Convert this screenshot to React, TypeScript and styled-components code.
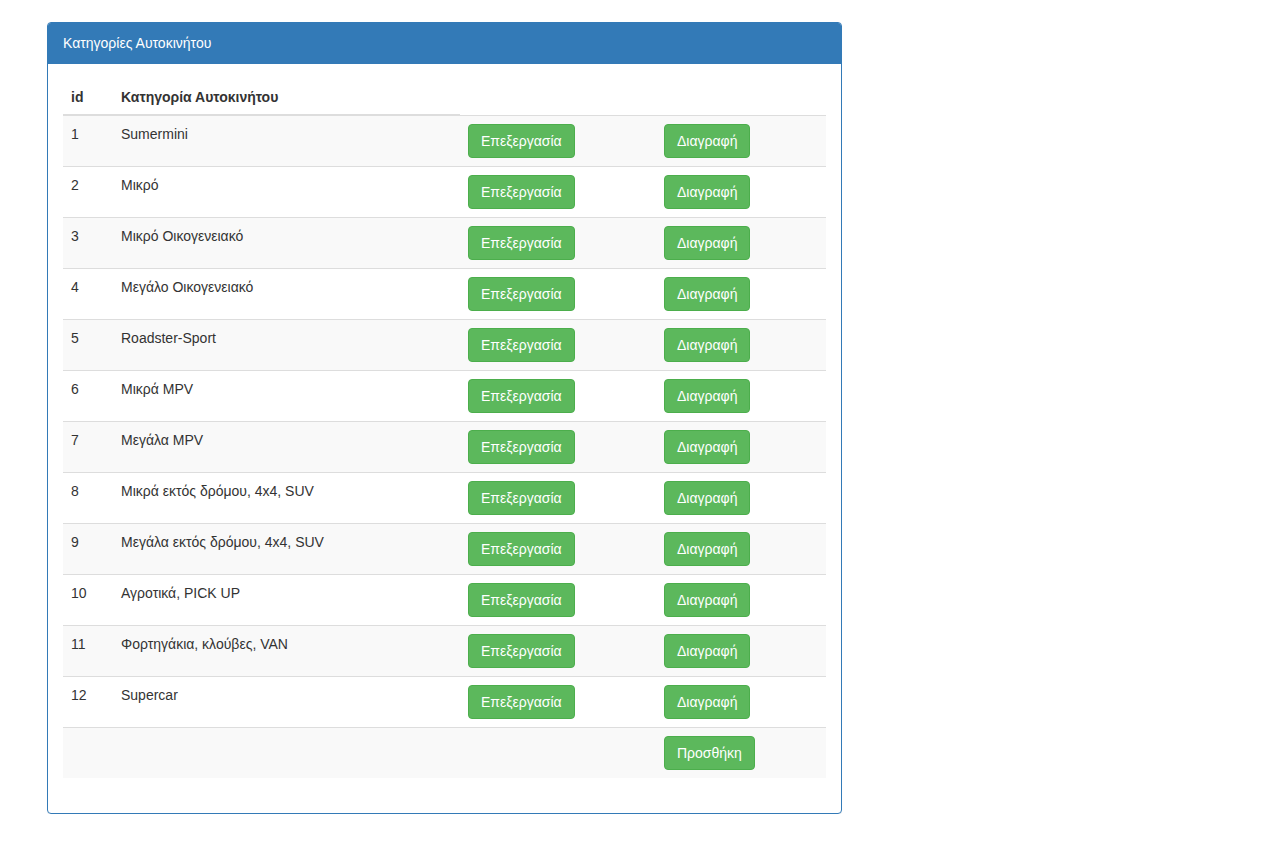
import React from "react";
import styled, { createGlobalStyle } from "styled-components";

const GlobalStyle = createGlobalStyle`
  html, body {
    margin: 0;
    padding: 0;
    background: #fff;
  }
  body {
    font-family: "Liberation Sans", Arial, Helvetica, sans-serif;
    font-size: 14px;
    line-height: 1.42857143;
    color: #333;
  }
  * {
    box-sizing: border-box;
  }
`;

const Page = styled.div`
  padding: 22px 0 0 47px;
`;

const Panel = styled.div`
  width: 795px;
  background-color: #fff;
  border: 1px solid #337ab7;
  border-radius: 4px;
  box-shadow: 0 1px 1px rgba(0, 0, 0, 0.05);
`;

const PanelHeading = styled.div`
  padding: 10px 15px;
  color: #fff;
  background-color: #337ab7;
  border-bottom: 1px solid #337ab7;
  border-top-left-radius: 3px;
  border-top-right-radius: 3px;
`;

const PanelBody = styled.div`
  padding: 15px;
`;

const Table = styled.table`
  width: 100%;
  max-width: 100%;
  margin-bottom: 20px;
  border-collapse: collapse;
  border-spacing: 0;
`;

const Th = styled.th`
  padding: 8px 8px 7px;
  text-align: left;
  vertical-align: bottom;
  font-weight: bold;
  line-height: 1.42857143;
  border-bottom: 2px solid #ddd;
`;

const Row = styled.tr<{ $striped: boolean }>`
  background-color: ${(p) => (p.$striped ? "#f9f9f9" : "transparent")};
`;

const Td = styled.td`
  padding: 8px;
  line-height: 1.42857143;
  vertical-align: top;
  border-top: 1px solid #ddd;
`;

const Button = styled.button`
  display: inline-block;
  margin: 0;
  padding: 6px 12px;
  font-family: inherit;
  font-size: 14px;
  font-weight: normal;
  line-height: 1.42857143;
  text-align: center;
  white-space: nowrap;
  color: #fff;
  background-color: #5cb85c;
  border: 1px solid #4cae4c;
  border-radius: 4px;
  cursor: pointer;
`;

const categories = [
  "Sumermini",
  "Μικρό",
  "Μικρό Οικογενειακό",
  "Μεγάλο Οικογενειακό",
  "Roadster-Sport",
  "Μικρά MPV",
  "Μεγάλα MPV",
  "Μικρά εκτός δρόμου, 4x4, SUV",
  "Μεγάλα εκτός δρόμου, 4x4, SUV",
  "Αγροτικά, PICK UP",
  "Φορτηγάκια, κλούβες, VAN",
  "Supercar",
];

export default function App() {
  return (
    <>
      <GlobalStyle />
      <Page>
        <Panel>
          <PanelHeading>Κατηγορίες Αυτοκινήτου</PanelHeading>
          <PanelBody>
            <Table>
              <colgroup>
                <col style={{ width: 50 }} />
                <col style={{ width: 347 }} />
                <col style={{ width: 196 }} />
                <col style={{ width: 170 }} />
              </colgroup>
              <thead>
                <tr>
                  <Th>id</Th>
                  <Th>Κατηγορία Αυτοκινήτου</Th>
                </tr>
              </thead>
              <tbody>
                {categories.map((name, index) => (
                  <Row key={index} $striped={index % 2 === 0}>
                    <Td>{index + 1}</Td>
                    <Td>{name}</Td>
                    <Td>
                      <Button>Επεξεργασία</Button>
                    </Td>
                    <Td>
                      <Button>Διαγραφή</Button>
                    </Td>
                  </Row>
                ))}
                <Row $striped={true}>
                  <Td />
                  <Td />
                  <Td />
                  <Td>
                    <Button>Προσθήκη</Button>
                  </Td>
                </Row>
              </tbody>
            </Table>
          </PanelBody>
        </Panel>
      </Page>
    </>
  );
}
